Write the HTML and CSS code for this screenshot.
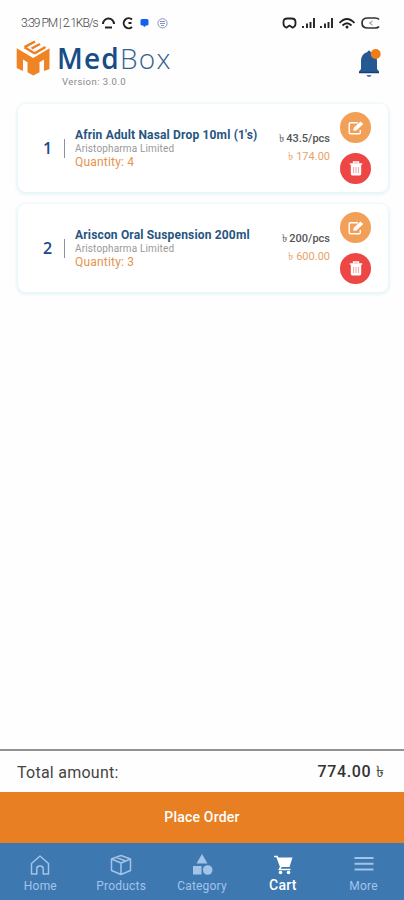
FILE: index.html
```html
<!DOCTYPE html>
<html lang="en">
<head>
<meta charset="utf-8">
<title>MedBox Cart</title>
<link rel="stylesheet" href="styles.css">
</head>
<body>
<svg class="defs" aria-hidden="true">
  <symbol id="edit" viewBox="0 0 16 14"><path d="M10 1.700H2.500a1.300 1.300 0 0 0-1.300 1.300v8.500a1.300 1.300 0 0 0 1.300 1.300H11a1.300 1.300 0 0 0 1.300-1.300V9" fill="none" stroke="#fff" stroke-width="1.400"/><path d="M5.200 9.800l.5-3L12.500.6l2.800 2.500-6.900 6.300z" fill="#fff"/></symbol>
  <symbol id="trash" viewBox="0 0 14 15"><path d="M4.500 2.500V1h5v1.500" fill="none" stroke="#fff" stroke-width="1.300"/><path d="M.8 2.300h12.400v1.500H.8zM1.800 3.600h10.400V13a1.400 1.400 0 0 1-1.400 1.400H3.200A1.400 1.400 0 0 1 1.800 13z" fill="#fff"/><path d="M4.600 6v6M7 6v6M9.400 6v6" stroke="#f6a0a0" stroke-width="1"/></symbol>
</svg>
<div class="status">
  <span class="clock">3:39 PM | 2.1KB/s</span>
  <svg class="left-icons" viewBox="0 0 70 16"><g fill="none" stroke="#222" stroke-width="2"><path d="M2 9a5.200 5.200 0 0 1 11 0M4 12.500h7"/><path d="M31 4.500a5 5 0 1 0 0 7.500M27.500 8h3"/></g><path d="M39.500 5.500q0-1.500 1.500-1.500h5q1.500 0 1.500 1.500v3.500q0 1.500-1.500 1.500h-1L43.500 12 42 10.500h-1q-1.500 0-1.500-1.500z" fill="#1262ef"/><g fill="none" stroke="#8794bc" stroke-width="1"><circle cx="61.500" cy="8.300" r="4.600"/><path d="M59 6.500h5M59 8.500h5M60 10.500h3"/></g></svg>
  <svg class="right-icons" viewBox="0 0 102 16"><path d="M6.500 12.500H6Q3.500 11.500 3.500 8.500V7q0-3.500 4-3.500h4q4 0 4 3.500v1.500q0 3-2.500 4h-.5L9.500 10.500z" fill="none" stroke="#222" stroke-width="1.800"/><path d="M23 11v2M27 8.500V13M30.500 7v6M34 3v10M41 11v2M45 8.500V13M48.500 7v6M52 3v10" stroke="#222" stroke-width="1.900"/><g fill="none" stroke="#222" stroke-width="1.800"><path d="M59.500 8q7.500-8 15 0M62.500 10.500q4.500-4.500 9 0"/></g><circle cx="67" cy="12" r="1.500" fill="#222"/><path d="M99 4.500q-1-1.500-4-1.500h-7q-6 0-6 5t6 5h7q3 0 4-1.500" fill="none" stroke="#333" stroke-width="1.700"/><path d="M92.500 6L89.500 8l3 2" fill="none" stroke="#888"/></svg>
</div>
<header class="header">
  <svg class="logo" viewBox="0 0 34 36"><path d="M.7 8.300L17.200 18 33.500 8.300V29l-5.500 2V19.500l-4.500 2.700v10L17.200 35.500l-5.700-3.300v-10L7 19.500V31L.7 28z" fill="#ef8425"/><path d="M8.500 7.200l10.300 6.300M8.500 7.200L19 1.500M15.500 8.500L24 4M18.500 13.300L29.500 7" fill="none" stroke="#ed8023" stroke-width="2.500"/></svg>
  <div class="brand"><div class="name"><b>Med</b><span>Box</span></div><div class="version">Version: 3.0.0</div></div>
  <svg class="bell" viewBox="0 0 24 30"><path d="M11 2.500q1.500 0 1.500 1.500 6.500 2 6.500 9v8l2 2.500v1H1v-1L3 21v-8q0-7 6.500-9Q9.500 2.500 11 2.500z" fill="#245a91"/><path d="M1 24.500h20" stroke="#183e7c" stroke-width="1.500"/><path d="M8.500 27h5q-.5 2-2.500 2t-2.500-2z" fill="#4a78a8"/><circle cx="17.700" cy="6" r="5" fill="#f07c18"/></svg>
</header>
<main class="cart">
  <article class="card">
    <div class="num">1</div>
    <div class="info"><div class="title">Afrin Adult Nasal Drop 10ml (1's)</div><div class="maker">Aristopharma Limited</div><div class="qty">Quantity: 4</div></div>
    <div class="prices"><div class="unit">৳ 43.5/pcs</div><div class="sum">৳ 174.00</div></div>
    <div class="actions"><div class="btn edit"><svg><use href="#edit"/></svg></div><div class="btn del"><svg><use href="#trash"/></svg></div></div>
  </article>
  <article class="card">
    <div class="num">2</div>
    <div class="info"><div class="title">Ariscon Oral Suspension 200ml</div><div class="maker">Aristopharma Limited</div><div class="qty">Quantity: 3</div></div>
    <div class="prices"><div class="unit">৳ 200/pcs</div><div class="sum">৳ 600.00</div></div>
    <div class="actions"><div class="btn edit"><svg><use href="#edit"/></svg></div><div class="btn del"><svg><use href="#trash"/></svg></div></div>
  </article>
</main>
<section class="total"><span class="label">Total amount:</span><span class="amount">774.00 ৳</span></section>
<div class="order">Place Order</div>
<nav class="nav">
  <div class="tab"><svg viewBox="0 0 22 22"><path d="M2.500 9.500L11 2l8.500 7.500V20h-5.300v-5.500q0-2.500-3.200-2.500t-3.200 2.500V20H2.500z" fill="none" stroke="currentColor" stroke-width="1.500" stroke-linejoin="round"/></svg><span>Home</span></div>
  <div class="tab"><svg viewBox="0 0 22 22"><path d="M11 1.500L20.500 5v11.500L11 20.500 1.500 16.500V5zM1.500 5L11 9l9.500-4M11 9v11.500M6 3.300L15.500 7" fill="none" stroke="currentColor" stroke-width="1.500" stroke-linejoin="round"/></svg><span>Products</span></div>
  <div class="tab"><svg viewBox="0 0 22 22"><path d="M11 0l5.500 9.500h-11zM2 12h8.500v8.500H2z" fill="currentColor"/><circle cx="16.700" cy="16" r="4.800" fill="currentColor"/></svg><span>Category</span></div>
  <div class="tab active"><svg viewBox="0 0 22 22"><path d="M5 3.500h15.500L17.500 13h-9z" fill="currentColor"/><path d="M2 2.500h3l3.800 10.300L7.500 15.500h11" fill="none" stroke="currentColor" stroke-width="1.700"/><circle cx="8.500" cy="18.500" r="1.800" fill="currentColor"/><circle cx="16.500" cy="18.500" r="1.800" fill="currentColor"/></svg><span>Cart</span></div>
  <div class="tab"><svg viewBox="0 0 22 22"><path d="M1.500 4h19M1.500 9.700h19M1.500 15.400h19" stroke="currentColor" stroke-width="2"/></svg><span>More</span></div>
</nav>
</body>
</html>
```
FILE: styles.css
```css
* { box-sizing: border-box; }
body { margin: 0; height: 900px; display: flex; flex-direction: column; background: #fefefe; font-family: Roboto, "Noto Sans", sans-serif; white-space: nowrap; overflow: hidden; }
.defs { display: none; }
svg { display: block; flex: none; }
.status { height: 38px; padding: 15px 22px 0 21px; display: flex; align-items: flex-start; }
.clock { width: 80px; font: 300 12px/16px Roboto, sans-serif; letter-spacing: -1px; color: #444; }
.left-icons { width: 70px; height: 16px; }
.right-icons { width: 102px; height: 16px; margin-left: auto; }
.header { height: 65px; padding: 2px 22px 0 16px; display: flex; align-items: flex-start; }
.logo { width: 34px; height: 36px; }
.brand { margin-left: 7px; }
.name { display: flex; height: 34px; font: 300 28px/36px "Open Sans", sans-serif; color: #37628f; }
.name b { width: 63px; font-weight: 600; letter-spacing: 1.2px; color: #164d86; }
.name span { letter-spacing: 1.3px; }
.version { margin: 2px 0 0 5px; font-size: 9.5px; line-height: 11px; letter-spacing: .45px; color: #888; }
.bell { width: 24px; height: 30px; margin: 8px 0 0 auto; }
.cart { flex: 1; padding: 1px 16px 0 18px; display: flex; flex-direction: column; gap: 12px; }
.card { height: 88px; display: flex; border-radius: 8px; background: #fff; box-shadow: 0 1px 3px 2px #e8f5f9; }
.num { width: 47px; height: 19px; margin-top: 35px; padding-left: 25px; border-right: 1px solid #8b93a1; font: 600 16px/19px "Open Sans", sans-serif; color: #20478a; }
.info { margin: 23px 0 0 10px; flex: 1; }
.title { font-size: 12px; line-height: 16px; font-weight: 700; letter-spacing: .17px; color: #275582; }
.maker { font-size: 10px; line-height: 11px; letter-spacing: .15px; color: #999; }
.qty { font-size: 12px; line-height: 16px; letter-spacing: .2px; color: #e5934e; }
.prices { margin-top: 26px; text-align: right; font-size: 11px; }
.unit { line-height: 18px; font-weight: 500; color: #555; }
.sum { line-height: 18px; color: #e7a365; }
.actions { width: 31px; margin: 8px 17px 0 10px; display: flex; flex-direction: column; gap: 10px; }
.btn { width: 31px; height: 31px; border-radius: 50%; display: grid; place-items: center; }
.edit { background: #f2a058; }
.del { background: #ee4545; }
.edit svg { width: 16px; height: 14px; }
.del svg { width: 14px; height: 15px; }
.total { height: 43px; padding: 2px 20px 0 17px; border-top: 2px solid #939393; display: flex; justify-content: space-between; align-items: center; font-size: 16px; letter-spacing: .25px; color: #444; }
.amount { font-weight: 500; letter-spacing: .65px; margin-right: -.65px; color: #333; }
.order { height: 51px; line-height: 51px; background: #e97f23; color: #fff; font-size: 14px; font-weight: 500; letter-spacing: .2px; text-align: center; }
.nav { height: 57px; background: #3d78b1; display: grid; grid-template-columns: repeat(5, 1fr); }
.tab { display: flex; flex-direction: column; align-items: center; padding-top: 11px; color: #a3c4e9; font-size: 12px; letter-spacing: .2px; }
.tab svg { width: 22px; height: 22px; }
.tab span { line-height: 20px; }
.active { color: #fff; font-size: 14px; font-weight: 500; }
.active span { line-height: 18px; }
```
